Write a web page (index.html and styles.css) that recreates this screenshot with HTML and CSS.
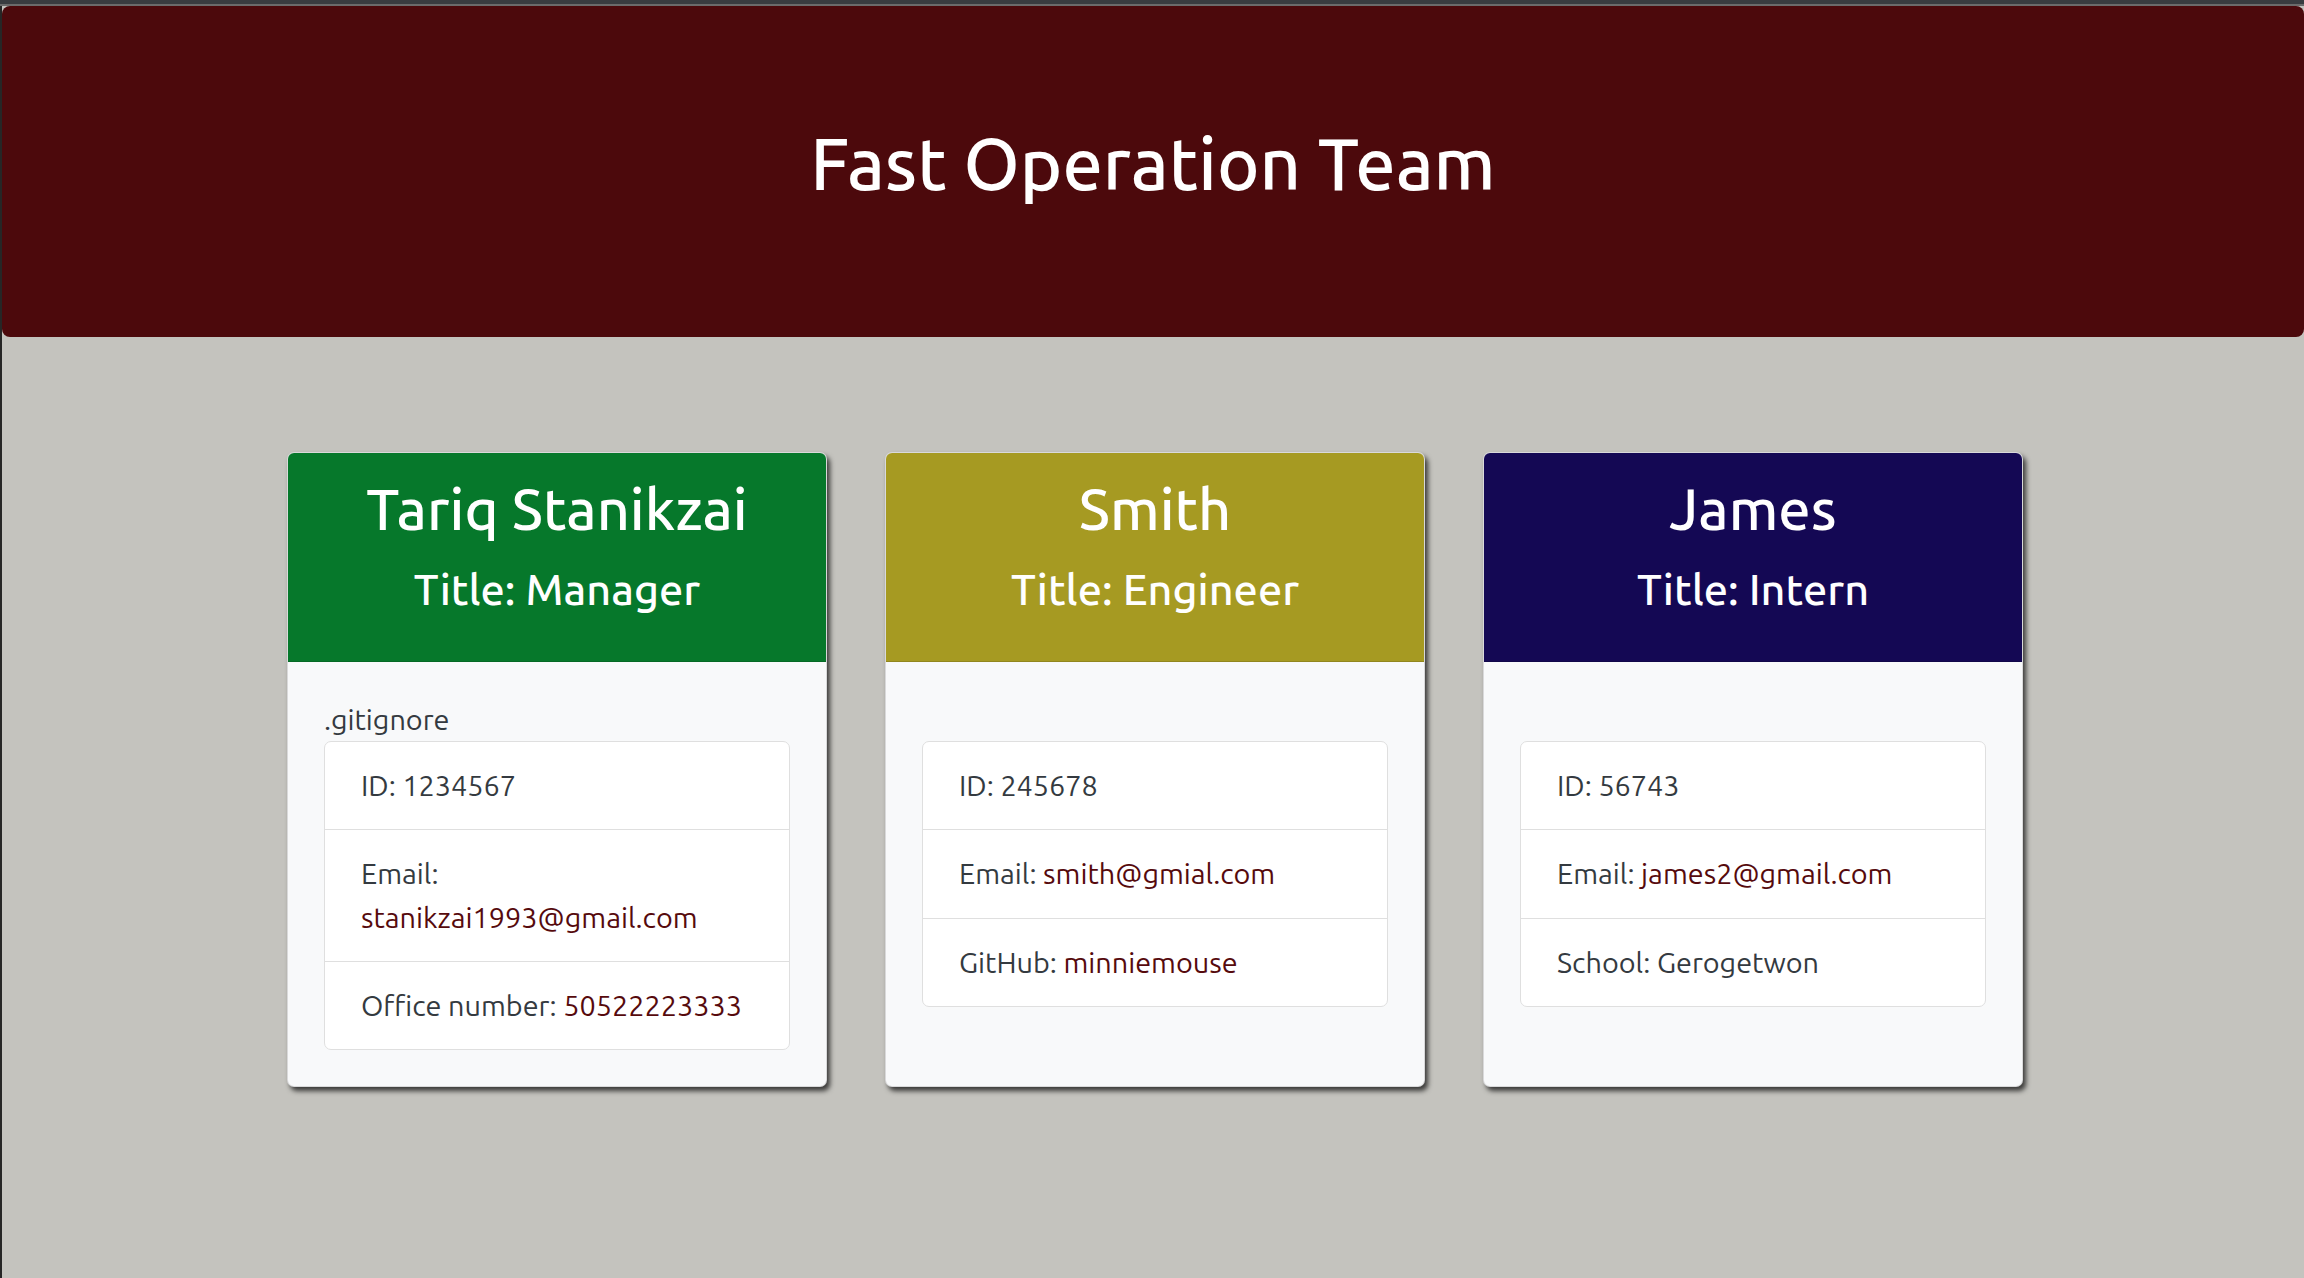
FILE: index.html
```html
<!DOCTYPE html>
<html lang="en">
<head>
<meta charset="utf-8">
<title>Fast Operation Team</title>
<link rel="stylesheet" href="styles.css">
</head>
<body>
<div class="topbar"></div>
<div class="page">
  <header class="jumbotron">
    <h1 class="team-title">Fast Operation Team</h1>
  </header>
  <main class="cards">
    <section class="card">
      <div class="card-header manager">
        <h2 class="name">Tariq Stanikzai</h2>
        <h4 class="role">Title: Manager</h4>
      </div>
      <div class="card-body">
        <div class="note">.gitignore</div>
        <ul class="list-group">
          <li class="list-item">ID: 1234567</li>
          <li class="list-item">Email: <a href="#">stanikzai1993@gmail.com</a></li>
          <li class="list-item">Office number: <a href="#">50522223333</a></li>
        </ul>
      </div>
    </section>
    <section class="card">
      <div class="card-header engineer">
        <h2 class="name">Smith</h2>
        <h4 class="role">Title: Engineer</h4>
      </div>
      <div class="card-body">
        <div class="note"></div>
        <ul class="list-group">
          <li class="list-item">ID: 245678</li>
          <li class="list-item">Email: <a href="#">smith@gmial.com</a></li>
          <li class="list-item">GitHub: <a href="#">minniemouse</a></li>
        </ul>
      </div>
    </section>
    <section class="card">
      <div class="card-header intern">
        <h2 class="name">James</h2>
        <h4 class="role">Title: Intern</h4>
      </div>
      <div class="card-body">
        <div class="note"></div>
        <ul class="list-group">
          <li class="list-item">ID: 56743</li>
          <li class="list-item">Email: <a href="#">james2@gmail.com</a></li>
          <li class="list-item">School: Gerogetwon</li>
        </ul>
      </div>
    </section>
  </main>
</div>
</body>
</html>
```

FILE: styles.css
```css
* { box-sizing: border-box; }

html, body {
  margin: 0;
  padding: 0;
}

body {
  background: #c4c3be;
  font-family: "Ubuntu", "Open Sans", "Noto Sans", sans-serif;
  font-size: 28.8px;
  line-height: 1.5;
  color: #343a40;
  min-height: 1278px;
}

.topbar {
  height: 6px;
  background: #393c40;
  border-bottom: 2px solid #6b6b6b;
}

.page {
  border-left: 2px solid #262626;
  min-height: 1272px;
}

.jumbotron {
  background: #4c090c;
  border-radius: 8px;
  padding: 115.2px 57.6px;
  margin: 0 0 115px 0;
}

.team-title {
  margin: 0 0 14.4px;
  text-align: center;
  color: #fff;
  font-size: 72px;
  font-weight: 500;
  line-height: 1.2;
}

.cards {
  display: flex;
  justify-content: center;
  align-items: stretch;
  gap: 58px;
  padding-left: 4px;
}

.card {
  width: 540px;
  display: flex;
  flex-direction: column;
  background: #f8f9fa;
  border: 1px solid rgba(0, 0, 0, 0.125);
  border-radius: 7px;
  overflow: hidden;
  box-shadow: 3px 4px 5px rgba(0, 0, 0, 0.7);
}

.card-header {
  padding: 21px 36px 45px;
  border-bottom: 1px solid rgba(0, 0, 0, 0.125);
  color: #fff;
  text-align: center;
}

.manager { background: #06782b; }
.engineer { background: #a69a22; }
.intern { background: #140854; }

.name {
  margin: 0 0 21px;
  font-size: 57.6px;
  font-weight: 500;
  line-height: 1.2;
}

.role {
  margin: 0;
  font-size: 43.2px;
  font-weight: 500;
  line-height: 1.2;
}

.card-body {
  flex: 1;
  padding: 36px;
}

.note {
  min-height: 43.2px;
}

.list-group {
  list-style: none;
  margin: 0;
  padding: 0;
  background: #fff;
  border: 1px solid #dfdfdf;
  border-radius: 7px;
}

.list-item {
  padding: 22px 36px;
  border-bottom: 1px solid #dfdfdf;
}

.list-item:last-child {
  border-bottom: none;
}

.list-item a {
  color: #560a0d;
  text-decoration: none;
}
```
